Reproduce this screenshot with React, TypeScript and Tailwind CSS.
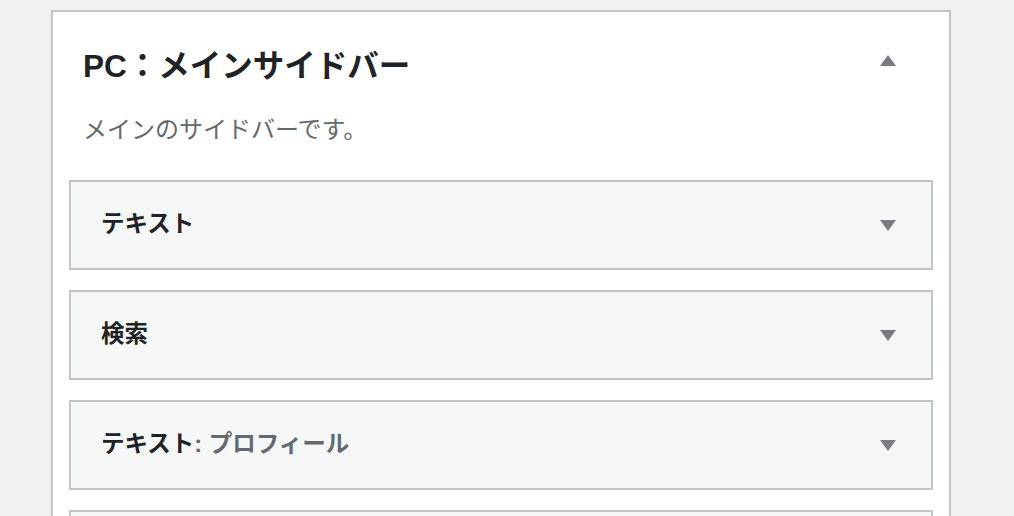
const font = { fontFamily: '"Liberation Sans", "Noto Sans CJK JP", sans-serif' }

function Arrow({ up = false }: { up?: boolean }) {
  return (
    <svg width="16" height="11" viewBox="0 0 16 11" className="shrink-0" aria-hidden="true">
      {up ? <path d="M8 0 L16 11 L0 11 Z" fill="#787c82" /> : <path d="M0 0 L16 0 L8 11 Z" fill="#787c82" />}
    </svg>
  )
}

function Widget({ title, sub }: { title?: string; sub?: string }) {
  return (
    <div className="flex h-[90px] items-center justify-between border-2 border-[#c3c4c7] bg-[#f6f7f7] pl-[30px] pr-[35px]">
      <h3 className="text-[23.5px] font-semibold leading-none text-[#1d2327]">
        {title}
        {sub && <span className="text-[#646970]">{sub}</span>}
      </h3>
      <Arrow />
    </div>
  )
}

export default function App() {
  return (
    <div className="h-[516px] overflow-hidden bg-[#f0f0f1] pl-[51px] pt-[10px]" style={font}>
      <div className="w-[900px] border-2 border-[#c3c4c7] bg-white pb-8">
        <div className="flex items-start justify-between pl-[30px] pr-[53px] pt-[33px]">
          <h2 className="text-[31.5px] font-bold leading-[42px] text-[#1d2327]">PC：メインサイドバー</h2>
          <div className="mt-[10px]">
            <Arrow up />
          </div>
        </div>
        <p className="mt-[26px] pl-[30px] text-[24px] leading-[33px] text-[#646970]">メインのサイドバーです。</p>
        <div className="mt-[34px] flex flex-col gap-5 px-4">
          <Widget title="テキスト" />
          <Widget title="検索" />
          <Widget title="テキスト" sub=": プロフィール" />
          <Widget />
        </div>
      </div>
    </div>
  )
}
